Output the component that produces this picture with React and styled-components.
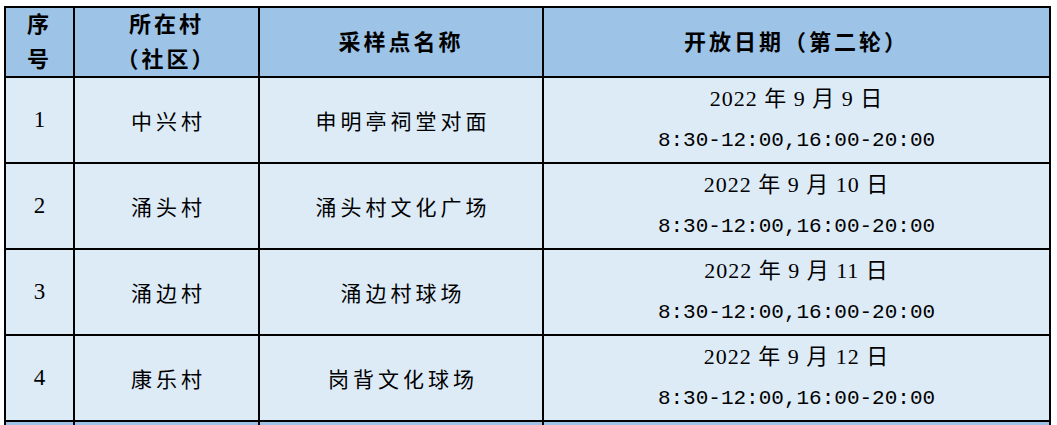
import React from 'react';
import styled, { createGlobalStyle } from 'styled-components';

const GlobalStyle = createGlobalStyle`
  html, body {
    margin: 0;
    padding: 0;
    background: #ffffff;
    overflow: hidden;
  }
`;

const cjk = `"Noto Sans CJK SC", sans-serif`;

const Page = styled.div`
  padding: 6px 0 0 4px;
`;

const Grid = styled.div`
  display: grid;
  grid-template-columns: 69px 185px 284px 507px;
  grid-template-rows: 70px repeat(4, 86px) 3px;
  border-top: 2px solid #000;
  border-left: 2px solid #000;
  width: max-content;
`;

const Cell = styled.div`
  box-sizing: border-box;
  border-right: 2px solid #000;
  border-bottom: ${p => (p.$open ? 'none' : '2px solid #000')};
  background: ${p => (p.$head ? '#9dc3e6' : '#ddebf7')};
  display: flex;
  flex-direction: column;
  align-items: center;
  justify-content: center;
  color: #000;
  text-align: center;
  overflow: hidden;
`;

const HeadText = styled.div`
  font-family: "Liberation Serif", ${cjk};
  font-size: 22px;
  font-weight: 700;
  line-height: 35px;
  letter-spacing: 3px;
`;

const Num = styled.span`
  font-family: "Liberation Serif", serif;
  font-size: 23px;
`;

const Name = styled.span`
  font-family: ${cjk};
  font-size: 21px;
  letter-spacing: 4px;
  margin-right: -4px;
`;

const DateLine = styled.div`
  font-family: "Liberation Serif", ${cjk};
  font-size: 22px;
  line-height: 42px;
  letter-spacing: 1px;
  white-space: pre;
`;

const TimeLine = styled.div`
  font-family: "Liberation Mono", monospace;
  font-size: 21px;
  line-height: 42px;
`;

const rows = [
  { no: 1, village: '中兴村', site: '申明亭祠堂对面', day: '9' },
  { no: 2, village: '涌头村', site: '涌头村文化广场', day: '10' },
  { no: 3, village: '涌边村', site: '涌边村球场', day: '11' },
  { no: 4, village: '康乐村', site: '岗背文化球场', day: '12' },
];

export default function App() {
  return (
    <Page>
      <GlobalStyle />
      <Grid>
        <Cell $head>
          <HeadText>序</HeadText>
          <HeadText>号</HeadText>
        </Cell>
        <Cell $head>
          <HeadText>所在村</HeadText>
          <HeadText>（社区）</HeadText>
        </Cell>
        <Cell $head>
          <HeadText>采样点名称</HeadText>
        </Cell>
        <Cell $head>
          <HeadText>开放日期（第二轮）</HeadText>
        </Cell>

        {rows.map(r => (
          <React.Fragment key={r.no}>
            <Cell>
              <Num>{r.no}</Num>
            </Cell>
            <Cell>
              <Name>{r.village}</Name>
            </Cell>
            <Cell>
              <Name>{r.site}</Name>
            </Cell>
            <Cell>
              <DateLine>{`2022 年 9 月 ${r.day} 日`}</DateLine>
              <TimeLine>8:30-12:00,16:00-20:00</TimeLine>
            </Cell>
          </React.Fragment>
        ))}

        <Cell $head $open />
        <Cell $head $open />
        <Cell $head $open />
        <Cell $head $open />
      </Grid>
    </Page>
  );
}
